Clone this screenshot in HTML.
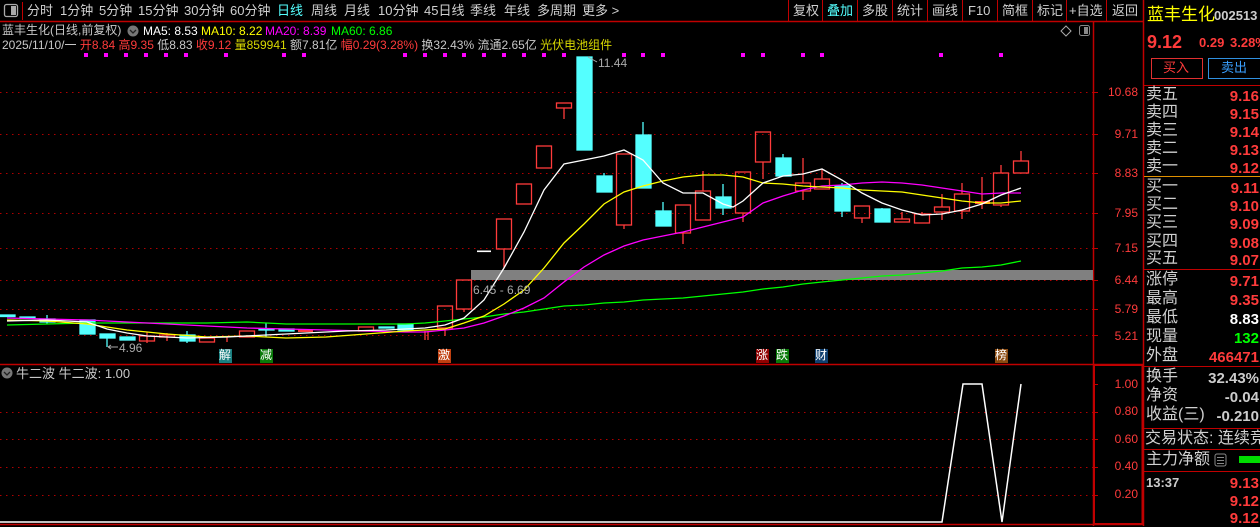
<!DOCTYPE html>
<html><head><meta charset="utf-8">
<style>
*{margin:0;padding:0;box-sizing:border-box}
body{width:1260px;height:526px;background:#000;overflow:hidden;position:relative;font-family:"Liberation Sans","Noto Sans CJK SC",sans-serif;font-size:12px;color:#c8c8c8}
.t{position:absolute;white-space:nowrap;line-height:1}
.tb{font-size:13px;color:#d0d0d0}
.rp{font-size:16px;color:#d0d0d0}
.rv{position:absolute;right:1px;font-size:15px;font-weight:bold;color:#ff3b3b;line-height:1}
</style></head><body>
<svg width="1260" height="526" style="position:absolute;left:0;top:0" xmlns="http://www.w3.org/2000/svg">
<line x1="0" y1="21.5" x2="1143" y2="21.5" stroke="#c00000" stroke-width="1.5"/>
<line x1="22.5" y1="2" x2="22.5" y2="20" stroke="#c00000"/>
<g stroke="#c00000">
<line x1="788.5" y1="0" x2="788.5" y2="21"/><line x1="822.5" y1="0" x2="822.5" y2="21"/>
<line x1="857.5" y1="0" x2="857.5" y2="21"/><line x1="892.5" y1="0" x2="892.5" y2="21"/>
<line x1="927.5" y1="0" x2="927.5" y2="21"/><line x1="962.5" y1="0" x2="962.5" y2="21"/>
<line x1="997.5" y1="0" x2="997.5" y2="21"/><line x1="1032.5" y1="0" x2="1032.5" y2="21"/>
<line x1="1066.5" y1="0" x2="1066.5" y2="21"/><line x1="1106.5" y1="0" x2="1106.5" y2="21"/>
</g>
<line x1="1143.5" y1="0" x2="1143.5" y2="526" stroke="#c00000" stroke-width="1.5"/>
<line x1="1093.5" y1="22" x2="1093.5" y2="526" stroke="#c00000" stroke-width="1.5"/>
<line x1="0" y1="364.5" x2="1143" y2="364.5" stroke="#c00000" stroke-width="1.5"/>
<rect x="1094" y="365" width="48.5" height="159" fill="none" stroke="#c00000" stroke-width="2"/>
<line x1="0" y1="524.5" x2="1143" y2="524.5" stroke="#c00000" stroke-width="1.5"/>
<g stroke="#b00000" stroke-dasharray="1.5,4.5" stroke-width="1">
<line x1="0" y1="92.5" x2="1093" y2="92.5"/><line x1="0" y1="134.5" x2="1093" y2="134.5"/>
<line x1="0" y1="173.5" x2="1093" y2="173.5"/><line x1="0" y1="213.5" x2="1093" y2="213.5"/>
<line x1="0" y1="248.5" x2="1093" y2="248.5"/><line x1="0" y1="280.5" x2="1093" y2="280.5"/>
<line x1="0" y1="309.5" x2="1093" y2="309.5"/><line x1="0" y1="335.5" x2="1093" y2="335.5"/>
<line x1="0" y1="412.5" x2="1093" y2="412.5"/><line x1="0" y1="439.5" x2="1093" y2="439.5"/>
<line x1="0" y1="467.5" x2="1093" y2="467.5"/><line x1="0" y1="495.5" x2="1093" y2="495.5"/>
</g>
<g stroke="#c00000">
<line x1="1094" y1="92.5" x2="1098" y2="92.5"/><line x1="1094" y1="134.5" x2="1098" y2="134.5"/>
<line x1="1094" y1="173.5" x2="1098" y2="173.5"/><line x1="1094" y1="213.5" x2="1098" y2="213.5"/>
<line x1="1094" y1="248.5" x2="1098" y2="248.5"/><line x1="1094" y1="280.5" x2="1098" y2="280.5"/>
<line x1="1094" y1="309.5" x2="1098" y2="309.5"/><line x1="1094" y1="335.5" x2="1098" y2="335.5"/>
<line x1="1094" y1="384.5" x2="1098" y2="384.5"/><line x1="1094" y1="412.5" x2="1098" y2="412.5"/>
<line x1="1094" y1="439.5" x2="1098" y2="439.5"/><line x1="1094" y1="467.5" x2="1098" y2="467.5"/>
<line x1="1094" y1="495.5" x2="1098" y2="495.5"/>
</g>
<rect x="471" y="270" width="622" height="10" fill="#808080"/>
<rect x="1090" y="270" width="3" height="10" fill="#808080"/>
<g fill="#ff00ff">
<rect x="84" y="53" width="4" height="4"/><rect x="104" y="53" width="4" height="4"/><rect x="124" y="53" width="4" height="4"/>
<rect x="144" y="53" width="4" height="4"/><rect x="164" y="53" width="4" height="4"/><rect x="184" y="53" width="4" height="4"/>
<rect x="224" y="53" width="4" height="4"/><rect x="282" y="53" width="4" height="4"/><rect x="302" y="53" width="4" height="4"/>
<rect x="403" y="53" width="4" height="4"/><rect x="423" y="53" width="4" height="4"/><rect x="443" y="53" width="4" height="4"/>
<rect x="462" y="53" width="4" height="4"/><rect x="482" y="53" width="4" height="4"/><rect x="502" y="53" width="4" height="4"/>
<rect x="522" y="53" width="4" height="4"/><rect x="542" y="53" width="4" height="4"/><rect x="562" y="53" width="4" height="4"/>
<rect x="622" y="53" width="4" height="4"/><rect x="641" y="53" width="4" height="4"/><rect x="661" y="53" width="4" height="4"/>
<rect x="741" y="53" width="4" height="4"/><rect x="761" y="53" width="4" height="4"/><rect x="801" y="53" width="4" height="4"/>
<rect x="820" y="53" width="4" height="4"/><rect x="939" y="53" width="4" height="4"/><rect x="999" y="53" width="4" height="4"/>
</g>
<g stroke="#ff3b3b" stroke-width="1.3" fill="none">
<line x1="445" y1="328" x2="445" y2="336"/><rect x="437.5" y="306" width="15" height="22"/>
<line x1="464" y1="309" x2="464" y2="312"/><rect x="456.5" y="280" width="15" height="29"/>
<line x1="504" y1="249" x2="504" y2="268"/><rect x="496.5" y="219" width="15" height="30"/>
<rect x="516.5" y="184" width="15" height="20"/>
<rect x="536.5" y="146" width="15" height="22"/>
<line x1="564" y1="108" x2="564" y2="119"/><rect x="556.5" y="103" width="15" height="5"/>
<line x1="624" y1="225" x2="624" y2="229"/><rect x="616.5" y="154" width="15" height="71"/>
<line x1="683" y1="233" x2="683" y2="244"/><rect x="675.5" y="205" width="15" height="28"/>
<line x1="703" y1="171" x2="703" y2="191"/><rect x="695.5" y="191" width="15" height="29"/>
<line x1="743" y1="213" x2="743" y2="222"/><rect x="735.5" y="172" width="15" height="41"/>
<line x1="763" y1="162" x2="763" y2="179"/><rect x="755.5" y="132" width="15" height="30"/>
<line x1="803" y1="158" x2="803" y2="183"/><line x1="803" y1="191" x2="803" y2="200"/><rect x="795.5" y="183" width="15" height="8"/>
<line x1="822" y1="169" x2="822" y2="179"/><rect x="814.5" y="179" width="15" height="10"/>
<line x1="862" y1="218" x2="862" y2="223"/><rect x="854.5" y="206" width="15" height="12"/>
<line x1="902" y1="212" x2="902" y2="219"/><rect x="894.5" y="219" width="15" height="3"/>
<line x1="922" y1="212" x2="922" y2="214"/><rect x="914.5" y="214" width="15" height="9"/>
<line x1="942" y1="194" x2="942" y2="207"/><line x1="942" y1="212" x2="942" y2="220"/><rect x="934.5" y="207" width="15" height="5"/>
<line x1="962" y1="183" x2="962" y2="194"/><line x1="962" y1="211" x2="962" y2="219"/><rect x="954.5" y="194" width="15" height="17"/>
<line x1="982" y1="177" x2="982" y2="209"/>
<line x1="1001" y1="165" x2="1001" y2="173"/><line x1="1001" y1="205" x2="1001" y2="207"/><rect x="993.5" y="173" width="15" height="32"/>
<line x1="1021" y1="151" x2="1021" y2="161"/><rect x="1013.5" y="161" width="15" height="12"/>
<line x1="147" y1="332" x2="147" y2="343"/><rect x="139.5" y="336" width="15" height="5"/>
<line x1="167" y1="333" x2="167" y2="341"/><rect x="159.5" y="335" width="15" height="2"/>
<rect x="199.5" y="338" width="15" height="4"/>
<line x1="227" y1="337" x2="227" y2="342"/>
<rect x="239.5" y="331" width="15" height="6"/>
<rect x="358.5" y="327" width="15" height="4"/>
<line x1="425" y1="331" x2="425" y2="340"/>
<line x1="428" y1="331" x2="428" y2="340"/>
</g>
<rect x="975" y="201" width="15" height="3" fill="#ff3b3b"/>
<rect x="298" y="329" width="15" height="3" fill="#ff3b3b"/>
<rect x="477" y="250.5" width="14" height="1.6" fill="#fff"/>
<g fill="#54ffff" stroke="#54ffff" stroke-width="1.3">
<rect x="577" y="57" width="15" height="93"/>
<line x1="604" y1="173" x2="604" y2="176"/><rect x="597" y="176" width="15" height="16"/>
<line x1="643" y1="122" x2="643" y2="135"/><rect x="636" y="135" width="15" height="53"/>
<line x1="663" y1="202" x2="663" y2="211"/><rect x="656" y="211" width="15" height="15"/>
<line x1="723" y1="184" x2="723" y2="215"/><rect x="716" y="197" width="15" height="11"/>
<line x1="783" y1="154" x2="783" y2="158"/><rect x="776" y="158" width="15" height="18"/>
<line x1="842" y1="183" x2="842" y2="217"/><rect x="835" y="186" width="15" height="25"/>
<line x1="882" y1="208" x2="882" y2="209"/><rect x="875" y="209" width="15" height="13"/>
<rect x="0" y="315" width="15" height="1.5"/>
<rect x="20" y="317" width="15" height="1.5"/>
<line x1="47" y1="315" x2="47" y2="324"/><rect x="40" y="319" width="15" height="3"/>
<rect x="80" y="320" width="15" height="14"/>
<line x1="107" y1="338" x2="107" y2="347"/><rect x="100" y="334" width="15" height="4"/>
<rect x="120" y="337" width="15" height="3"/>
<line x1="187" y1="331" x2="187" y2="343"/><rect x="180" y="335" width="15" height="6"/>
<line x1="266" y1="323" x2="266" y2="337"/><rect x="259" y="329" width="15" height="1"/>
<rect x="279" y="329" width="15" height="2"/>
<rect x="379" y="327" width="15" height="1"/>
<rect x="398" y="324" width="15" height="6"/>
</g>
<g fill="none" stroke-width="1.3">
<polyline stroke="#00ff00" points="7,325 47,324 87,323 127,323 167,323 207,323 247,322 286,324 326,324 366,324 405,324 425,323 445,321 464,319 484,317 504,314 524,312 544,309 564,306 584,305 604,303 624,302 643,300 663,299 683,298 703,296 723,294 743,292 763,289 783,287 803,284 822,282 842,280 862,278 882,276 902,275 922,273 942,271 962,268 982,267 1001,265 1021,261"/>
<polyline stroke="#ff00ff" points="7,318 47,319 87,320 127,322 167,324 207,326 247,328 286,329 326,330 366,331 405,332 425,332 445,330 464,328 484,323 504,316 524,308 544,298 564,282 584,267 604,255 624,246 643,240 663,236 683,232 703,227 723,222 743,217 763,203 783,196 803,190 822,186 842,185 862,183 882,182 902,183 922,185 942,188 962,191 982,194 1001,193 1021,193"/>
<polyline stroke="#ffff00" points="7,320 47,321 87,324 127,330 167,334 207,337 247,336 286,338 326,337 366,334 405,331 425,330 445,329 464,323 484,316 504,304 524,290 544,268 564,243 584,224 604,204 624,192 643,186 663,181 683,177 703,175 723,175 743,177 763,183 783,184 803,186 822,187 842,188 862,190 882,191 902,192 922,195 942,198 962,201 982,203 1001,203 1021,201"/>
<polyline stroke="#ffffff" points="7,321 47,320 87,322 107,329 127,333 147,336 187,338 227,337 266,335 306,333 346,331 386,330 405,329 425,328 445,325 464,318 484,300 504,268 524,232 544,190 564,164 584,160 604,156 624,150 643,160 663,183 683,193 703,193 723,204 733,207 743,201 763,183 783,176 803,174 822,169 842,180 862,193 882,203 902,210 922,215 942,214 962,210 982,204 1001,195 1021,188"/>
</g>
<g stroke="#aaa" fill="none"><path d="M108,347 L118,347 M108,347 l3,-2 M108,347 l3,2"/><path d="M588,57 L597,62"/></g>
<polyline fill="none" stroke="#fff" stroke-width="1.5" points="0,522 942,522 963,384 982,384 1002,522 1021,384"/>
<line x1="1144" y1="85.5" x2="1260" y2="85.5" stroke="#c00000"/>
<line x1="1144" y1="176.5" x2="1260" y2="176.5" stroke="#e09000"/>
<line x1="1144" y1="269.5" x2="1260" y2="269.5" stroke="#c00000"/>
<line x1="1144" y1="366.5" x2="1260" y2="366.5" stroke="#c00000"/>
<line x1="1144" y1="428.5" x2="1260" y2="428.5" stroke="#c00000"/>
<line x1="1144" y1="449.5" x2="1260" y2="449.5" stroke="#c00000"/>
<line x1="1144" y1="471.5" x2="1260" y2="471.5" stroke="#c00000"/>
<rect x="1151.5" y="58.5" width="51" height="20" fill="none" stroke="#e03030"/>
<rect x="1208.5" y="58.5" width="52" height="20" fill="none" stroke="#3090e0"/>
<rect x="1239" y="456" width="21" height="7" fill="#00dd00"/>
<rect x="1215" y="454" width="11" height="12" rx="2" fill="none" stroke="#888"/>
<g stroke="#888"><line x1="1217" y1="457.5" x2="1224" y2="457.5"/><line x1="1217" y1="460.5" x2="1224" y2="460.5"/><line x1="1217" y1="463.5" x2="1224" y2="463.5"/></g>
<rect x="4.5" y="4.5" width="13" height="12" rx="2" fill="none" stroke="#aaa" stroke-width="1.3"/>
<rect x="11" y="6" width="5" height="9" fill="#aaa"/>
<rect x="1079.5" y="25.5" width="10" height="10" rx="2" fill="none" stroke="#888"/>
<rect x="1084" y="27" width="4" height="7" fill="#888"/>
<path d="M1066,26 L1071,31 L1066,36 L1061,31 Z" fill="none" stroke="#aaa"/>
<circle cx="133" cy="31" r="5.5" fill="#777"/><path d="M130,30 l3,3 l3,-3" stroke="#222" fill="none" stroke-width="1.3"/>
<circle cx="7" cy="373" r="5.5" fill="#777"/><path d="M4,372 l3,3 l3,-3" stroke="#222" fill="none" stroke-width="1.3"/>
</svg>

<div class="t tb" style="left:27px;top:4px">分时</div>
<div class="t tb" style="left:60px;top:4px">1分钟</div>
<div class="t tb" style="left:99px;top:4px">5分钟</div>
<div class="t tb" style="left:138px;top:4px">15分钟</div>
<div class="t tb" style="left:184px;top:4px">30分钟</div>
<div class="t tb" style="left:230px;top:4px">60分钟</div>
<div class="t tb" style="left:277px;top:4px;color:#54ffff">日线</div>
<div class="t tb" style="left:311px;top:4px">周线</div>
<div class="t tb" style="left:344px;top:4px">月线</div>
<div class="t tb" style="left:378px;top:4px">10分钟</div>
<div class="t tb" style="left:424px;top:4px">45日线</div>
<div class="t tb" style="left:470px;top:4px">季线</div>
<div class="t tb" style="left:504px;top:4px">年线</div>
<div class="t tb" style="left:537px;top:4px">多周期</div>
<div class="t tb" style="left:582px;top:4px">更多 &gt;</div>
<div class="t tb" style="left:793px;top:4px">复权</div>
<div class="t tb" style="left:827px;top:4px;color:#54ffff">叠加</div>
<div class="t tb" style="left:862px;top:4px">多股</div>
<div class="t tb" style="left:897px;top:4px">统计</div>
<div class="t tb" style="left:932px;top:4px">画线</div>
<div class="t tb" style="left:968px;top:4px">F10</div>
<div class="t tb" style="left:1002px;top:4px">简框</div>
<div class="t tb" style="left:1037px;top:4px">标记</div>
<div class="t tb" style="left:1069px;top:4px">+自选</div>
<div class="t tb" style="left:1112px;top:4px">返回</div>

<div class="t" style="left:2px;top:24px;font-size:12px">蓝丰生化(日线,前复权)</div>
<div class="t" style="left:143px;top:25px;color:#fff">MA5: 8.53</div>
<div class="t" style="left:201px;top:25px;color:#ffff00">MA10: 8.22</div>
<div class="t" style="left:265px;top:25px;color:#ff00ff">MA20: 8.39</div>
<div class="t" style="left:331px;top:25px;color:#00ff00">MA60: 6.86</div>
<div class="t" style="left:2px;top:39px">2025/11/10/一 <span style="color:#ff3b3b">开8.84 高9.35</span> 低8.83 <span style="color:#ff3b3b">收9.12</span> <span style="color:#d8d800">量859941</span> 额7.81亿 <span style="color:#ff3b3b">幅0.29(3.28%)</span> 换32.43% 流通2.65亿 <span style="color:#d8d800">光伏电池组件</span></div>

<div class="t" style="left:598px;top:57px;color:#aaa">11.44</div>
<div class="t" style="left:119px;top:342px;color:#aaa">4.96</div>
<div class="t" style="left:473px;top:284px;color:#aaa">6.45 - 6.69</div>

<div class="t" style="left:219px;top:349px;width:13px;height:14px;background:#1a7f80;color:#fff;font-size:12px">解</div>
<div class="t" style="left:260px;top:349px;width:13px;height:14px;background:#0a7a0a;color:#fff;font-size:12px">减</div>
<div class="t" style="left:438px;top:349px;width:13px;height:14px;background:#c04010;color:#fff;font-size:12px">激</div>
<div class="t" style="left:756px;top:349px;width:13px;height:14px;background:#900000;color:#fff;font-size:12px">涨</div>
<div class="t" style="left:776px;top:349px;width:13px;height:14px;background:#0a7a0a;color:#fff;font-size:12px">跌</div>
<div class="t" style="left:815px;top:349px;width:13px;height:14px;background:#104070;color:#fff;font-size:12px">财</div>
<div class="t" style="left:995px;top:349px;width:13px;height:14px;background:#8a4a10;color:#fff;font-size:12px">榜</div>

<div class="t" style="left:16px;top:367px;font-size:13px">牛二波 牛二波: 1.00</div>

<div class="t" style="right:122px;top:86px;color:#ff3b3b">10.68</div>
<div class="t" style="right:122px;top:128px;color:#ff3b3b">9.71</div>
<div class="t" style="right:122px;top:167px;color:#ff3b3b">8.83</div>
<div class="t" style="right:122px;top:207px;color:#ff3b3b">7.95</div>
<div class="t" style="right:122px;top:242px;color:#ff3b3b">7.15</div>
<div class="t" style="right:122px;top:274px;color:#ff3b3b">6.44</div>
<div class="t" style="right:122px;top:303px;color:#ff3b3b">5.79</div>
<div class="t" style="right:122px;top:330px;color:#ff3b3b">5.21</div>
<div class="t" style="right:122px;top:378px;color:#ff3b3b">1.00</div>
<div class="t" style="right:122px;top:405px;color:#ff3b3b">0.80</div>
<div class="t" style="right:122px;top:433px;color:#ff3b3b">0.60</div>
<div class="t" style="right:122px;top:460px;color:#ff3b3b">0.40</div>
<div class="t" style="right:122px;top:488px;color:#ff3b3b">0.20</div>

<div class="t" style="left:1147px;top:6px;font-size:17px;color:#ffff00">蓝丰生化</div>
<div class="t" style="left:1214px;top:9px;font-size:13px;font-weight:bold;color:#ccc">002513</div>
<div class="t" style="left:1147px;top:33px;font-size:18px;font-weight:bold;color:#ff3b3b">9.12</div>
<div class="t" style="left:1199px;top:36px;font-size:13px;font-weight:bold;color:#ff3b3b">0.29</div>
<div class="t" style="left:1230px;top:36px;font-size:13px;font-weight:bold;color:#ff3b3b">3.28%</div>
<div class="t" style="left:1163px;top:61px;font-size:13px;color:#ff3b3b">买入</div>
<div class="t" style="left:1221px;top:61px;font-size:13px;color:#3aa0ff">卖出</div>

<div class="t rp" style="left:1146px;top:87px">卖五</div><div class="rv" style="top:89px">9.16</div>
<div class="t rp" style="left:1146px;top:105px">卖四</div><div class="rv" style="top:107px">9.15</div>
<div class="t rp" style="left:1146px;top:123px">卖三</div><div class="rv" style="top:125px">9.14</div>
<div class="t rp" style="left:1146px;top:141px">卖二</div><div class="rv" style="top:143px">9.13</div>
<div class="t rp" style="left:1146px;top:159px">卖一</div><div class="rv" style="top:161px">9.12</div>
<div class="t rp" style="left:1146px;top:179px">买一</div><div class="rv" style="top:181px">9.11</div>
<div class="t rp" style="left:1146px;top:197px">买二</div><div class="rv" style="top:199px">9.10</div>
<div class="t rp" style="left:1146px;top:215px">买三</div><div class="rv" style="top:217px">9.09</div>
<div class="t rp" style="left:1146px;top:234px">买四</div><div class="rv" style="top:236px">9.08</div>
<div class="t rp" style="left:1146px;top:251px">买五</div><div class="rv" style="top:253px">9.07</div>
<div class="t rp" style="left:1146px;top:272px">涨停</div><div class="rv" style="top:274px">9.71</div>
<div class="t rp" style="left:1146px;top:291px">最高</div><div class="rv" style="top:293px">9.35</div>
<div class="t rp" style="left:1146px;top:310px">最低</div><div class="rv" style="top:312px;color:#fff">8.83</div>
<div class="t rp" style="left:1146px;top:329px">现量</div><div class="rv" style="top:331px;color:#00ff00">132</div>
<div class="t rp" style="left:1146px;top:348px">外盘</div><div class="rv" style="top:350px">466471</div>
<div class="t rp" style="left:1146px;top:369px">换手</div><div class="rv" style="top:371px;color:#ccc">32.43%</div>
<div class="t rp" style="left:1146px;top:388px">净资</div><div class="rv" style="top:390px;color:#ccc">-0.04</div>
<div class="t rp" style="left:1146px;top:407px">收益(三)</div><div class="rv" style="top:409px;color:#ccc">-0.210</div>
<div class="t rp" style="left:1145px;top:431px">交易状态: 连续竞价</div>
<div class="t rp" style="left:1146px;top:452px">主力净额</div>
<div class="t" style="left:1146px;top:476px;font-size:13px;font-weight:bold;color:#ccc">13:37</div>
<div class="rv" style="top:476px">9.13</div>
<div class="rv" style="top:494px">9.12</div>
<div class="rv" style="top:511px">9.12</div>
</body></html>
